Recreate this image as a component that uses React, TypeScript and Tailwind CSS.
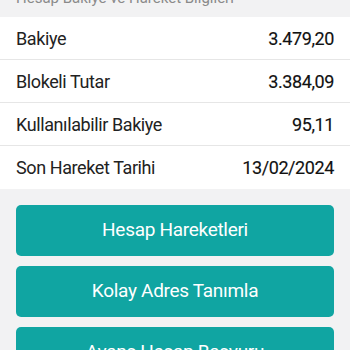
const rows = [
  { label: 'Bakiye', value: '3.479,20' },
  { label: 'Blokeli Tutar', value: '3.384,09' },
  { label: 'Kullanılabilir Bakiye', value: '95,11' },
  { label: 'Son Hareket Tarihi', value: '13/02/2024' },
];

const actions = ['Hesap Hareketleri', 'Kolay Adres Tanımla', 'Avans Hesap Başvuru'];

export default function App() {
  return (
    <div className="h-[350px] w-[350px] overflow-hidden bg-[#f2f2f3] font-['Roboto',sans-serif]">
      {/* section title, scrolled mostly out of view */}
      <div className="h-[17px] overflow-hidden px-4">
        <p className="-mt-[12px] text-[15px] leading-5 text-[#8a8a8a]">Hesap Bakiye ve Hareket Bilgileri</p>
      </div>

      <div className="bg-white">
        {rows.map((row) => (
          <div
            key={row.label}
            className="flex h-[43px] items-center justify-between border-b border-[#e6e6e6] px-4 text-[18px] tracking-[-0.4px] text-[#222] last:border-b-0"
          >
            <span>{row.label}</span>
            <span className="text-[#111] [-webkit-text-stroke:0.15px_#111]">{row.value}</span>
          </div>
        ))}
      </div>

      <div className="flex flex-col gap-[10px] px-4 pt-4">
        {actions.map((a) => (
          <button
            key={a}
            className="flex h-[51px] w-full shrink-0 items-center justify-center rounded-[5px] bg-[#10a5a2] text-[19px] tracking-[-0.3px] text-white"
          >
            {a}
          </button>
        ))}
      </div>
    </div>
  );
}
